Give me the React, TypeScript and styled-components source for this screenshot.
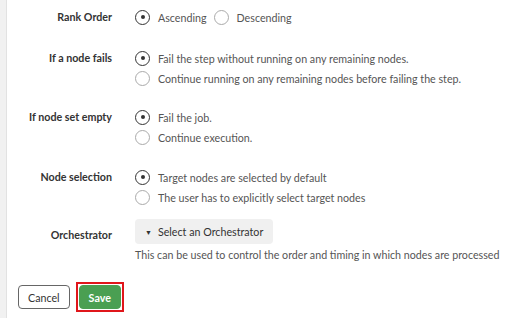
import React from "react";
import styled, { createGlobalStyle } from "styled-components";

const Global = createGlobalStyle`
  html, body { margin: 0; padding: 0; background: #fff; }
  body { font-family: Lato, "Open Sans", sans-serif; font-size: 10.7px; color: #333; }
`;

const Page = styled.div`
  display: flex;
  width: 512px;
  height: 318px;
  overflow: hidden;
`;

const Strip = styled.div`
  width: 6px;
  flex: none;
  background: #f1f1f1;
  border-right: 1px solid #e2e2e2;
`;

const Main = styled.div`
  flex: 1;
  display: flex;
  flex-direction: column;
  padding: 7px 0 0 11px;
`;

const Row = styled.div<{ $gap: number }>`
  display: grid;
  grid-template-columns: 94px 1fr;
  column-gap: 23px;
  align-items: start;
  margin-top: ${(p) => p.$gap}px;
`;

const Label = styled.div<{ $offset?: number }>`
  text-align: right;
  font-weight: 700;
  color: #333;
  line-height: 20px;
  padding-top: ${(p) => p.$offset ?? 0}px;
`;

const Options = styled.div<{ $inline?: boolean }>`
  display: flex;
  flex-direction: ${(p) => (p.$inline ? "row" : "column")};
  gap: ${(p) => (p.$inline ? "7px" : "0")};
`;

const Option = styled.label`
  display: flex;
  align-items: center;
  height: 20px;
  gap: 8px;
  color: #555;
`;

const Radio = styled.span<{ $checked?: boolean }>`
  box-sizing: border-box;
  width: 15px;
  height: 15px;
  border-radius: 50%;
  border: 1.5px solid ${(p) => (p.$checked ? "#333" : "#aaa")};
  display: flex;
  align-items: center;
  justify-content: center;
  &::after {
    content: "";
    width: 4px;
    height: 4px;
    border-radius: 50%;
    background: #333;
    display: ${(p) => (p.$checked ? "block" : "none")};
  }
`;

const SelectButton = styled.button`
  font: inherit;
  color: #333;
  background: #f0f0f0;
  border: none;
  border-radius: 4px;
  height: 25px;
  width: 138px;
  padding: 0 0 0 10px;
  display: flex;
  align-items: center;
  gap: 6px;
`;

const Caret = styled.span`
  font-size: 7px;
  color: #333;
`;

const Help = styled.div`
  color: #555;
  margin-top: 2px;
  line-height: 18px;
  white-space: nowrap;
`;

const Footer = styled.div`
  display: flex;
  align-items: center;
  gap: 6px;
  margin-top: 18px;
`;

const Button = styled.button<{ $primary?: boolean }>`
  font: inherit;
  height: 24px;
  border-radius: 4px;
  padding: 0 ${(p) => (p.$primary ? 9 : 9)}px;
  border: 1px solid ${(p) => (p.$primary ? "#4a9f52" : "#666")};
  background: ${(p) => (p.$primary ? "#4a9f52" : "#fff")};
  color: ${(p) => (p.$primary ? "#fff" : "#333")};
  font-weight: ${(p) => (p.$primary ? 700 : 400)};
`;

const Highlight = styled.span`
  display: inline-flex;
  border: 2px solid #e0161b;
  padding: 1px;
`;

type Opt = { text: string; checked?: boolean };

const Group = ({ opts, inline }: { opts: Opt[]; inline?: boolean }) => (
  <Options $inline={inline}>
    {opts.map((o) => (
      <Option key={o.text}>
        <Radio $checked={o.checked} />
        {o.text}
      </Option>
    ))}
  </Options>
);

export default function App() {
  return (
    <Page>
      <Global />
      <Strip />
      <Main>
        <Row $gap={0}>
          <Label>Rank Order</Label>
          <Group inline opts={[{ text: "Ascending", checked: true }, { text: "Descending" }]} />
        </Row>
        <Row $gap={21}>
          <Label>If a node fails</Label>
          <Group
            opts={[
              { text: "Fail the step without running on any remaining nodes.", checked: true },
              { text: "Continue running on any remaining nodes before failing the step." },
            ]}
          />
        </Row>
        <Row $gap={19}>
          <Label>If node set empty</Label>
          <Group opts={[{ text: "Fail the job.", checked: true }, { text: "Continue execution." }]} />
        </Row>
        <Row $gap={20}>
          <Label>Node selection</Label>
          <Group
            opts={[
              { text: "Target nodes are selected by default", checked: true },
              { text: "The user has to explicitly select target nodes" },
            ]}
          />
        </Row>
        <Row $gap={12}>
          <Label $offset={6}>Orchestrator</Label>
          <div>
            <SelectButton>
              <Caret>▼</Caret>
              Select an Orchestrator
            </SelectButton>
            <Help>This can be used to control the order and timing in which nodes are processed</Help>
          </div>
        </Row>
        <Footer>
          <Button>Cancel</Button>
          <Highlight>
            <Button $primary>Save</Button>
          </Highlight>
        </Footer>
      </Main>
    </Page>
  );
}
